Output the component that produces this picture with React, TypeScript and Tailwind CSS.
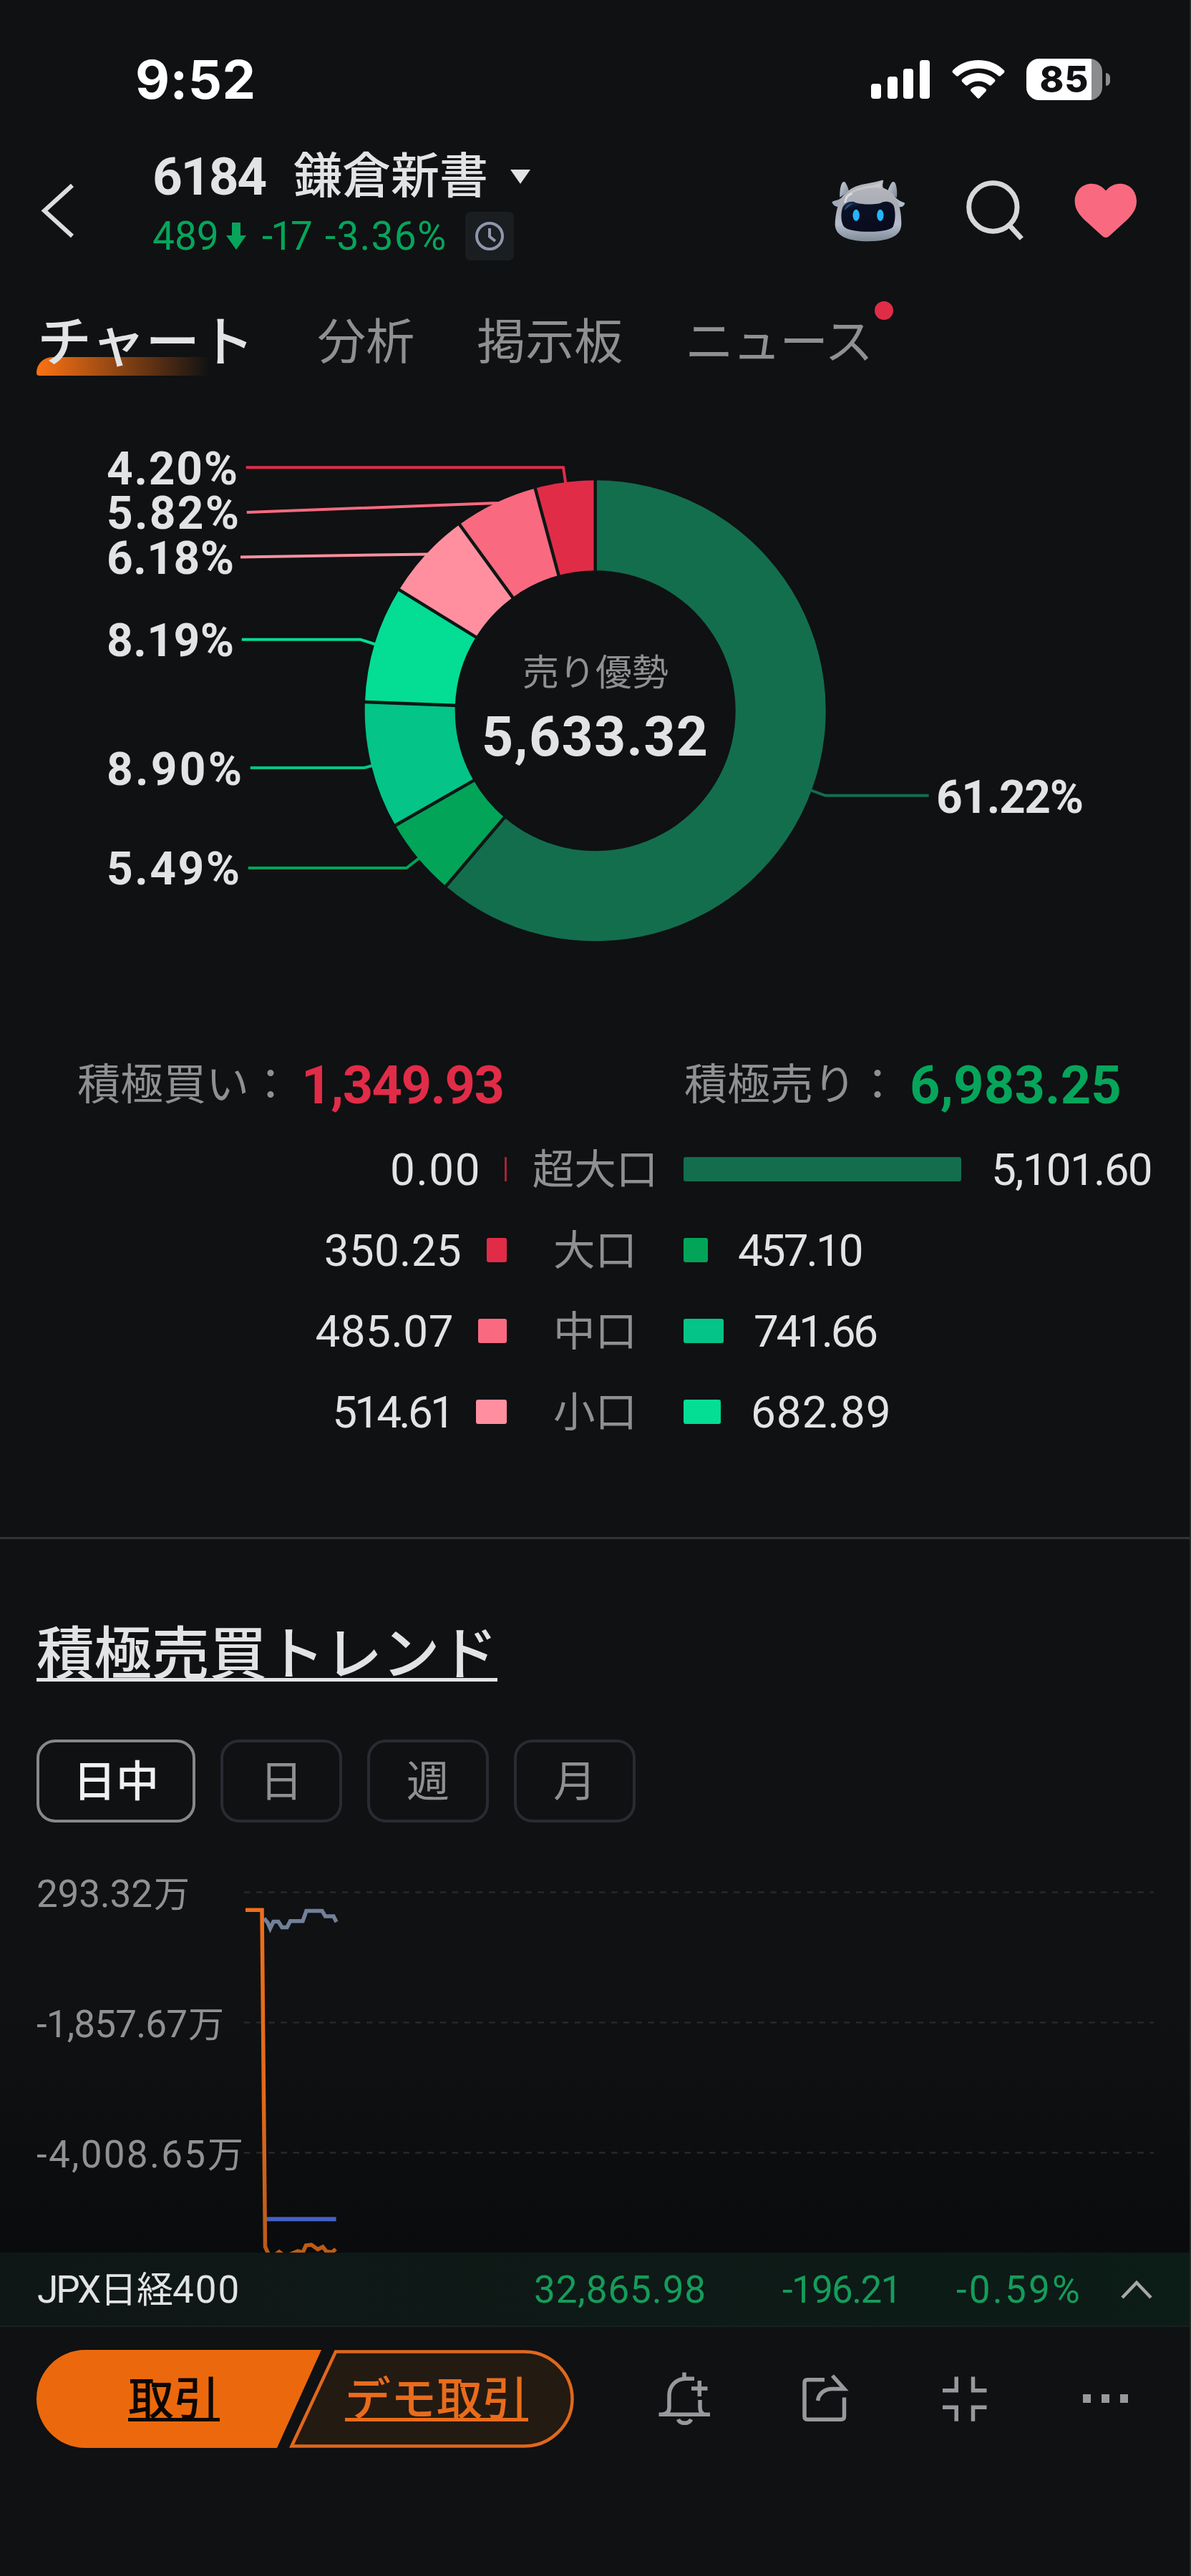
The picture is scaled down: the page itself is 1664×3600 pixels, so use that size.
import React from "react";

const CX = 831.7;
const CY = 993.3;
const R_OUT = 322;
const R_IN = 196;

const slices = [
  { value: 61.22, color: "#136e4e" },
  { value: 5.49, color: "#02a458" },
  { value: 8.9, color: "#04c487" },
  { value: 8.19, color: "#04dd94" },
  { value: 6.18, color: "#ff8f9f" },
  { value: 5.82, color: "#f96a80" },
  { value: 4.2, color: "#e12c48" },
];

const callouts = [
  { text: "4.20%", x: 149, y: 677, w: 183, color: "#e12c48", points: "343.7,653.3 787,653.3 790.5,677" },
  { text: "5.82%", x: 149, y: 739, w: 185, color: "#f96a80", points: "344.7,716 687,703.3 700,703.3" },
  { text: "6.18%", x: 149, y: 801.5, w: 178, color: "#ff8f9f", points: "336,778.4 600,774.5" },
  { text: "8.19%", x: 149, y: 917, w: 178, color: "#04dd94", points: "337.8,893.7 503.4,893.7 526,901" },
  { text: "8.90%", x: 149, y: 1096.5, w: 189, color: "#04c487", points: "349.7,1073 509,1073 522,1069.5" },
  { text: "5.49%", x: 149, y: 1236, w: 186, color: "#02a458", points: "346.7,1213 568,1213 586,1199" },
  { text: "61.22%", x: 1308, y: 1135.5, w: 206, color: "#136e4e", points: "1297.6,1111.8 1153,1111.8 1132,1104" },
];

const total = slices.reduce((sum, s) => sum + s.value, 0);

function polar(angle: number, r: number) {
  return [CX + r * Math.sin(angle), CY - r * Math.cos(angle)];
}

function ring(start: number, end: number) {
  const large = end - start > Math.PI ? 1 : 0;
  const [x1, y1] = polar(start, R_OUT);
  const [x2, y2] = polar(end, R_OUT);
  const [x3, y3] = polar(end, R_IN);
  const [x4, y4] = polar(start, R_IN);
  return `M${x1} ${y1}A${R_OUT} ${R_OUT} 0 ${large} 1 ${x2} ${y2}L${x3} ${y3}A${R_IN} ${R_IN} 0 ${large} 0 ${x4} ${y4}Z`;
}

function StatusBar() {
  return (
    <div className="flex h-[180px] items-center pt-[41px] pl-[189px]">
      <div className="w-[1028px] font-['Inter'] text-[74px] leading-none font-bold tracking-[0.500px] text-white">9:52</div>
      <div className="flex h-[54px] w-[82px] items-end justify-between">
        <div className="h-[21px] w-[14px] rounded-[4px] bg-white" />
        <div className="h-[31px] w-[14px] rounded-[4px] bg-white" />
        <div className="h-[42px] w-[14px] rounded-[4px] bg-white" />
        <div className="h-[54px] w-[14px] rounded-[4px] bg-white" />
      </div>
      <svg className="ml-[31px] h-[54px] w-[74px]" viewBox="0 0 74 54" fill="#fff">
        <path d="M37 0C51 0 64 5 73 14.500Q74 16 73 17.500L68 22Q66.500 23 65 22C57 15 47.500 11.500 37 11.500S17 15 9 22Q7.500 23 6 22L1 17.500Q0 16 1 14.500C10 5 23 0 37 0Z" />
        <path d="M37 18C46 18 54 21.500 60 27Q61 28.500 60 30L55 35Q53.500 36 52 35C48 31.500 43 29.500 37 29.500S26 31.500 22 35Q20.500 36 19 35L14 30Q13 28.500 14 27C20 21.500 28 18 37 18Z" />
        <path d="M37 36.500C41 36.500 45 38 47.500 40.500Q48.500 42 47.500 43.500L38.500 53Q37 54.500 35.500 53L26.500 43.500Q25.500 42 26.500 40.500C29 38 33 36.500 37 36.500Z" />
      </svg>
      <div className="ml-[30px] flex h-[58px] w-[106px] items-center justify-center rounded-[18px] bg-[linear-gradient(90deg,#fff_86%,#8b8c8e_86%)] font-['Inter'] text-[51px] leading-none font-extrabold tracking-[1px] text-[#0f1113]">
        85
      </div>
      <div className="ml-[5px] h-[18px] w-[6px] rounded-r-[6px] bg-[#8b8c8e]" />
    </div>
  );
}

function Robot() {
  return (
    <svg className="h-[97px] w-[107px]" viewBox="60 75 320 290">
      <defs>
        <linearGradient id="shell" x1="0" y1="0" x2="0" y2="1">
          <stop offset="0" stopColor="#b9b9bf" />
          <stop offset="0.400" stopColor="#a9acb5" />
          <stop offset="0.720" stopColor="#b4bccb" />
          <stop offset="1" stopColor="#7f8a97" />
        </linearGradient>
        <linearGradient id="horn" x1="0" y1="0" x2="1" y2="1">
          <stop offset="0" stopColor="#c7d0da" />
          <stop offset="1" stopColor="#7b8794" />
        </linearGradient>
        <linearGradient id="visor" x1="0" y1="0" x2="0.600" y2="1">
          <stop offset="0" stopColor="#1d3d66" />
          <stop offset="0.250" stopColor="#0a1024" />
          <stop offset="1" stopColor="#090b1c" />
        </linearGradient>
      </defs>
      <path d="M100 168C98 140 104 112 112 104Q118 99 123 105C130 116 134 126 138 140Z" fill="url(#horn)" />
      <path d="M338 168C341 140 336 112 329 104Q322 99 317 105C310 116 304 128 299 142Z" fill="url(#horn)" />
      <path d="M68 190Q66 184 76 182Q96 178 112 166L104 206Q78 210 68 190Z" fill="#9eaabb" />
      <path d="M371 195Q373 189 364 187Q348 182 330 166L338 206Q362 212 371 195Z" fill="#aebccd" />
      <path d="M136 140C160 118 196 112 226 107Q258 101 276 95Q284 94 281 103Q277 116 281 127C300 134 322 150 334 168C350 196 358 240 357 280C356 322 320 350 218 351C116 350 82 320 80 282C80 240 92 194 104 172Q116 154 136 140Z" fill="url(#shell)" />
      <path d="M140 148C180 120 230 122 277 104Q268 118 276 128C230 122 170 132 134 160Z" fill="#d2d2d7" opacity=".6" />
      <path d="M122 186Q126 160 148 152" stroke="#e6edf5" strokeWidth="9" fill="none" strokeLinecap="round" opacity=".7" />
      <path d="M110 214C118 190 140 182 160 186C180 198 260 200 276 188C298 180 320 188 326 204C334 230 332 268 322 290C304 316 140 320 116 288C104 268 104 236 110 214Z" fill="url(#visor)" />
      <path d="M118 222Q126 194 156 192Q136 204 118 222Z" fill="#2b5584" />
      <ellipse cx="168" cy="242" rx="14" ry="24" fill="#25b4fb" />
      <ellipse cx="269" cy="242" rx="14" ry="24" fill="#25b4fb" />
    </svg>
  );
}

function Header() {
  return (
    <div className="flex h-[220px] items-start pr-[72px] pl-[55px]">
      <svg className="mt-[74px] h-[80px] w-[52px]" viewBox="0 0 52 80" fill="none" stroke="#dcdddf" strokeWidth="6">
        <path d="M46 5L7 40.500L46 76" />
      </svg>
      <div className="mt-[27px] ml-[106px] flex flex-col">
        <div className="flex h-[80px] items-center leading-none text-[#e2e3e5]">
          <div className="w-[197px] text-[73px] font-bold tracking-[-2.500px]">6184</div>
          <div className="text-[68px] font-medium">鎌倉新書</div>
          <svg className="ml-[30px] h-[20px] w-[30px]" viewBox="0 0 30 20" fill="#e2e3e5">
            <path d="M1 0H29L15 20Z" />
          </svg>
        </div>
        <div className="mt-[9px] flex h-[68px] items-center text-[55px] leading-none text-[#06a55b]">
          <div className="w-[103px]">489</div>
          <svg className="h-[38px] w-[28px]" viewBox="0 0 28 38" fill="#06a55b">
            <path d="M8 0H20V18H28L14 38L0 18H8Z" />
          </svg>
          <div className="ml-[22px] w-[88px] tracking-[-3px]">-17</div>
          <div className="w-[196px] tracking-[1.300px]">-3.36%</div>
          <div className="flex h-[68px] w-[68px] items-center justify-center rounded-[7px] bg-[#1a1e21]">
            <svg className="h-[44px] w-[44px]" viewBox="0 0 44 44" fill="none" stroke="#8f96ac" strokeWidth="4">
              <circle cx="22" cy="22" r="18" />
              <path d="M22 11V22.500L30 29" />
            </svg>
          </div>
        </div>
      </div>
      <div className="mt-[65px] ml-auto flex items-start">
        <Robot />
        <svg className="ml-[76px] h-[97px] w-[90px]" viewBox="610 75 270 290" fill="none" stroke="#d6d7d9" strokeWidth="21">
          <circle cx="743" cy="208" r="101" />
          <path d="M812 284L863 340" />
        </svg>
        <svg className="ml-[65px] h-[97px] w-[94px]" viewBox="1074 75 282 290" fill="#f96a80">
          <path d="M1215 139C1230 122 1250 110 1274 110C1316 110 1344 142 1344 184C1344 222 1318 250 1290 274L1230 329Q1215 342 1200 329L1140 274C1112 250 1085 222 1085 184C1085 142 1114 110 1156 110C1180 110 1200 122 1215 139Z" />
        </svg>
      </div>
    </div>
  );
}

function Tabs() {
  return (
    <div className="flex h-[158px] items-center gap-[87px] pl-[52px] text-[68px] leading-none text-[#8f9092]">
      <div className="relative mr-[1px] text-[76px] font-medium text-[#e2e3e5]">
        <div className="absolute top-[58px] -left-px h-[26px] w-[243px] rounded-tl-[22px] rounded-bl-[4px] bg-linear-to-r from-[#fc7213] to-transparent" />
        <span className="relative">チャート</span>
      </div>
      <div>分析</div>
      <div>掲示板</div>
      <div className="relative tracking-[-2px]">
        ニュース
        <div className="absolute top-[-24px] left-[265px] h-[26px] w-[26px] rounded-full bg-[#e12c48]" />
      </div>
    </div>
  );
}

function Donut() {
  let angle = 0;
  const arcs = slices.map((s) => {
    const start = angle;
    angle += (s.value / total) * Math.PI * 2;
    return { start, end: angle, color: s.color };
  });
  return (
    <svg className="h-[872px] w-full" viewBox="0 558 1664 872">
      {callouts.map((c) => (
        <polyline key={c.text} points={c.points} fill="none" stroke={c.color} strokeWidth="4" />
      ))}
      {arcs.map((a) => (
        <path key={a.start} d={ring(a.start, a.end)} fill={a.color} />
      ))}
      {arcs.map((a) => {
        const [x1, y1] = polar(a.start, R_IN - 3);
        const [x2, y2] = polar(a.start, R_OUT + 1);
        return <line key={a.start} x1={x1} y1={y1} x2={x2} y2={y2} stroke="#0c1715" strokeWidth="4.500" />;
      })}
      {callouts.map((c) => (
        <text key={c.text} x={c.x} y={c.y} textLength={c.w} className="fill-[#e2e3e5] text-[64px] font-bold">
          {c.text}
        </text>
      ))}
      <text x="730" y="958" className="fill-[#8f9092] text-[51px]">売り優勢</text>
      <text x="673" y="1056" textLength="316" className="fill-[#e2e3e5] text-[77px] font-bold">
        5,633.32
      </text>
    </svg>
  );
}

function Row(props: { left: string; leftBar: string; name: string; rightBar: string; right: string; leftText: string; rightText: string }) {
  return (
    <div className="flex h-[113px] items-center text-[62px] leading-none text-[#e2e3e5]">
      <div className="flex w-[708px] items-center justify-end">
        <div className={`pt-[3px] ${props.leftText}`}>{props.left}</div>
        <div className={`h-[34px] ${props.leftBar}`} />
      </div>
      <div className="w-[247px] pt-[4px] text-center text-[58.500px] text-[#8f9092]">{props.name}</div>
      <div className={`mr-[42px] h-[34px] rounded-[3px] ${props.rightBar}`} />
      <div className={`pt-[3px] ${props.rightText}`}>{props.right}</div>
    </div>
  );
}

function Breakdown() {
  return (
    <div className="h-[718px]">
      <div className="flex h-[147px] items-center pt-[26px] pl-[108px] leading-none">
        <div className="w-[313px] text-[60px] text-[#8f9092]">積極買い：</div>
        <div className="w-[535px] text-[74px] font-bold tracking-[-1.500px] text-[#e12c48]">1,349.93</div>
        <div className="w-[315px] text-[60px] text-[#8f9092]">積極売り：</div>
        <div className="text-[74px] font-bold tracking-[0.200px] text-[#06a55b]">6,983.25</div>
      </div>
      <Row left="0.00" leftText="mr-[33px] tracking-[1.500px]" leftBar="w-[3px] bg-[#a5233a]" name="超大口" rightBar="w-[388px] bg-[#136e4e]" right="5,101.60" rightText="tracking-[-1.700px]" />
      <Row left="350.25" leftText="mr-[35px] tracking-[0.300px]" leftBar="w-[28px] rounded-[3px] bg-[#e12c48]" name="大口" rightBar="w-[34px] bg-[#02a458]" right="457.10" rightText="tracking-[-3px]" />
      <Row left="485.07" leftText="mr-[34px] tracking-[0.500px]" leftBar="w-[40px] rounded-[3px] bg-[#f96a80]" name="中口" rightBar="w-[56px] bg-[#04c487]" right="741.66" rightText="tracking-[-3.300px]" />
      <Row left="514.61" leftText="mr-[33px] tracking-[-3.800px]" leftBar="w-[43px] rounded-[3px] bg-[#ff8f9f]" name="小口" rightBar="w-[52px] bg-[#04dd94]" right="682.89" rightText="tracking-[1px]" />
    </div>
  );
}

function Trend() {
  const grid = [2644.5, 2826.5, 3008.5];
  return (
    <div className="border-t-[3px] border-[#313336]">
      <div className="mt-[114px] ml-[51px] flex h-[96px] items-center text-[80.500px] leading-none font-medium text-[#e2e3e5]">
        <span className="underline decoration-[5px] underline-offset-[5px] [text-decoration-skip-ink:none]">積極売買トレンド</span>
      </div>
      <div className="mt-[70px] ml-[51px] flex h-[116px] gap-[35px] text-[60px] leading-none text-[#8f9092]">
        <div className="flex w-[222px] items-center justify-center rounded-[26px] border-[4px] border-[#87888a] pt-[4px] font-medium text-[#f0f0f1]">日中</div>
        <div className="flex w-[170px] items-center justify-center rounded-[26px] border-[4px] border-[#292b32] pt-[4px]">日</div>
        <div className="flex w-[170px] items-center justify-center rounded-[26px] border-[4px] border-[#292b32] pt-[4px]">週</div>
        <div className="flex w-[170px] items-center justify-center rounded-[26px] border-[4px] border-[#292b32] pt-[4px]">月</div>
      </div>
      <svg className="block h-[601px] w-full bg-[linear-gradient(180deg,#0f1113_45%,#0a0b0c_100%)]" viewBox="0 2547 1664 601">
        <defs>
          <linearGradient id="fall" gradientUnits="userSpaceOnUse" x1="0" y1="2669" x2="0" y2="3148">
            <stop offset="0" stopColor="#ee6f18" />
            <stop offset="0.550" stopColor="#e06a1b" />
            <stop offset="1" stopColor="#b85a18" />
          </linearGradient>
        </defs>
        {grid.map((y) => (
          <line key={y} x1="341" x2="1612" y1={y} y2={y} stroke="#26282a" strokeWidth="2.500" strokeDasharray="8.600 8.500" />
        ))}
        <g className="fill-[#909193] text-[53px]">
          <text x="51" y="2665" textLength="162">293.32</text>
          <text x="215" y="2665" className="text-[50px]">万</text>
          <text x="51" y="2847" textLength="211">-1,857.67</text>
          <text x="263" y="2847" className="text-[50px]">万</text>
          <text x="51" y="3029" textLength="236">-4,008.65</text>
          <text x="290" y="3029" className="text-[50px]">万</text>
        </g>
        <g fill="none" strokeWidth="5.500">
          <polyline stroke="#71809a" points="369,2681 374,2687 377.500,2695 382,2685.500 389,2685.500 394,2693.500 401,2693.500 405.500,2684.700 423,2684.700 428,2670.500 450,2670.500 454.500,2678 466,2678 470,2686" />
          <path stroke="#4460c8" strokeWidth="6" d="M372 3101.200H469.600" />
          <polyline stroke="url(#fall)" points="343,2669.200 366,2669.200 370.500,3140 375,3150" />
          <polyline stroke="#bd5b16" points="386,3150 390,3147 394,3150" />
          <polyline stroke="#bd5b16" points="404,3151 416,3146 423,3148 427.500,3138 435,3137 444,3143.500 451,3140 456,3146.500 464,3147.500 469,3143" />
        </g>
      </svg>
    </div>
  );
}

function Ticker() {
  return (
    <div className="flex h-[104px] items-center border-b-[2px] border-[#18211f] bg-linear-to-r from-[#0f1716] to-[#0c1c17] pt-[3px] pl-[52px] text-[53px] leading-none text-[#159c5b]">
      <div className="flex w-[694px] items-center text-[#e2e3e5]">
        <span className="w-[88px] tracking-[-3px]">JPX</span>
        <span className="w-[101px] text-[51px]">日経</span>
        <span className="tracking-[2px]">400</span>
      </div>
      <div className="w-[347px] tracking-[0.900px]">32,865.98</div>
      <div className="w-[243px] tracking-[-1.700px]">-196.21</div>
      <div className="w-[228px] tracking-[3.200px]">-0.59%</div>
      <svg className="-mt-[3px] ml-[1px] h-[30px] w-[46px]" viewBox="0 0 46 30" fill="none" stroke="#a6a8a9" strokeWidth="4.500">
        <path d="M3 27L23 6L43 27" />
      </svg>
    </div>
  );
}

function ActionBar() {
  return (
    <div className="flex h-[348px] items-start pt-[32px] pl-[51px]">
      <div className="relative flex h-[137px] w-[751px] items-center pt-[2px] text-[64px] leading-none font-medium">
        <svg className="absolute inset-0 h-full w-full" viewBox="0 0 751 137">
          <path d="M68 0H398L336 137H68C30 137 0 106 0 68.500S30 0 68 0Z" fill="#eb690c" />
          <path d="M418 2.500H682C718 2.500 748.500 32 748.500 68.500S718 134.500 682 134.500H356.500Z" fill="#231a12" stroke="#e0681c" strokeWidth="4.500" />
        </svg>
        <span className="relative ml-[128px] text-[#0d0704] underline decoration-[4.500px] underline-offset-[4px] [text-decoration-skip-ink:none]">取引</span>
        <span className="relative ml-[175px] text-[#e96c1b] underline decoration-[4.500px] underline-offset-[4px] [text-decoration-skip-ink:none]">デモ取引</span>
      </div>
      <svg className="mt-[27px] ml-[113px] h-[84px] w-[82px]" viewBox="915 3311 82 84" fill="none" stroke="#98999c" strokeWidth="5.500">
        <path d="M956 3315.500V3324M970 3324.200H958C944 3324.200 935 3335 935 3348V3364Q935 3374 925 3374M978 3354V3364Q978 3372 984 3374M920.500 3374.200H992M966 3338H988.500M977.300 3327V3349M947.500 3381C950 3388 963 3388 965.500 3381" />
      </svg>
      <svg className="mt-[27px] ml-[117px] h-[84px] w-[76px]" viewBox="1114 3311 76 84" fill="none" stroke="#98999c" strokeWidth="5.500">
        <path d="M1152 3325.700H1128Q1124 3325.700 1124 3330V3377Q1124 3381.300 1128 3381.300H1175Q1179.500 3381.300 1179.500 3377V3350.500" />
        <path d="M1163 3320L1179.500 3338.500H1163C1152 3338.500 1144 3345 1142.500 3355" />
      </svg>
      <svg className="mt-[27px] ml-[120px] h-[84px] w-[76px]" viewBox="1310 3311 76 84" fill="none" stroke="#98999c" strokeWidth="5.500">
        <path d="M1336.200 3321.500V3340.700H1317M1359.500 3321.500V3340.700H1378.500M1317 3364.300H1336.200V3383.700M1378.500 3364.300H1359.500V3383.700" />
      </svg>
      <div className="mt-[62px] ml-[127px] flex gap-[15px]">
        <div className="h-[12px] w-[11px] bg-[#98999c]" />
        <div className="h-[12px] w-[11px] bg-[#98999c]" />
        <div className="h-[12px] w-[11px] bg-[#98999c]" />
      </div>
    </div>
  );
}

export default function App() {
  return (
    <div className="relative flex h-[3600px] w-[1664px] flex-col overflow-hidden bg-[#0f1113] font-['Roboto','Noto_Sans_CJK_JP',sans-serif] whitespace-nowrap">
      <StatusBar />
      <Header />
      <Tabs />
      <Donut />
      <Breakdown />
      <Trend />
      <Ticker />
      <ActionBar />
      <div className="absolute inset-y-0 right-0 w-[2px] bg-[#28292b]" />
    </div>
  );
}
